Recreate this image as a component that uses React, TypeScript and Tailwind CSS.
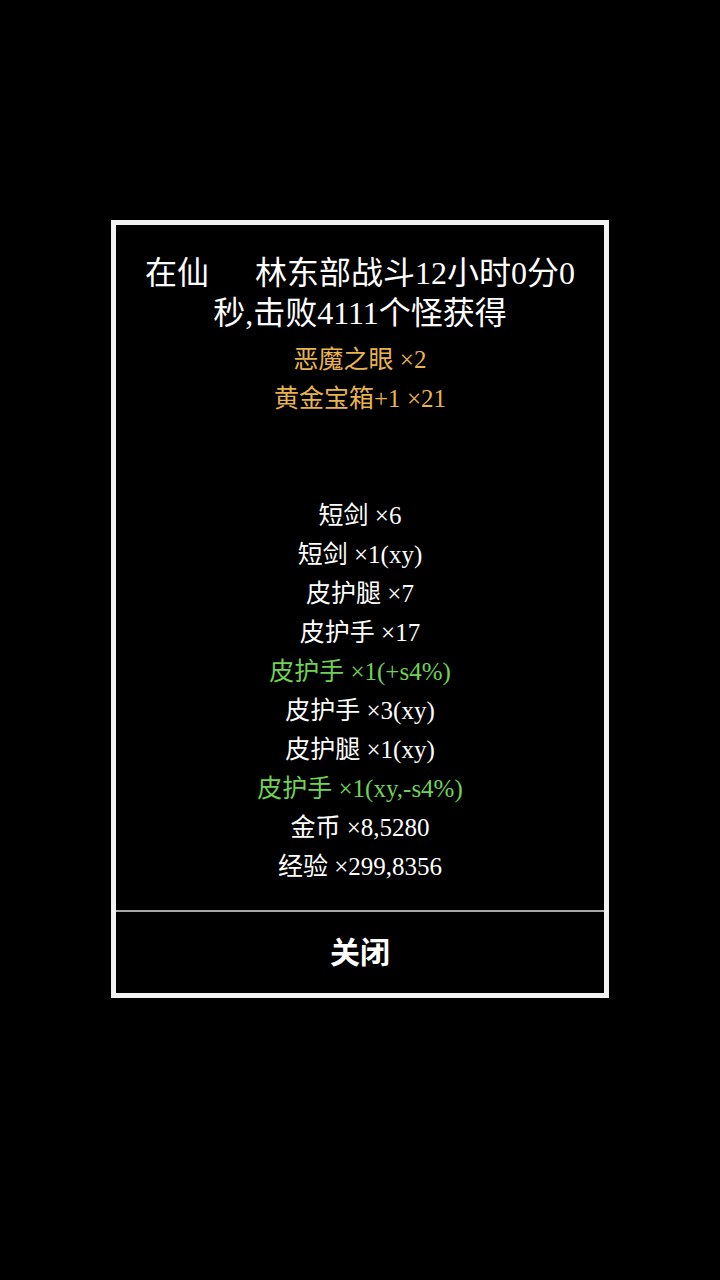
import React from "react";

type Drop = { name: string; qty: string; tone?: "gold" | "green" | "hidden" };

const drops: Drop[] = [
  { name: "恶魔之眼", qty: "×2", tone: "gold" },
  { name: "黄金宝箱+1", qty: "×21", tone: "gold" },
  { name: "", qty: "", tone: "hidden" },
  { name: "", qty: "", tone: "hidden" },
  { name: "短剑", qty: "×6" },
  { name: "短剑", qty: "×1(xy)" },
  { name: "皮护腿", qty: "×7" },
  { name: "皮护手", qty: "×17" },
  { name: "皮护手", qty: "×1(+s4%)", tone: "green" },
  { name: "皮护手", qty: "×3(xy)" },
  { name: "皮护腿", qty: "×1(xy)" },
  { name: "皮护手", qty: "×1(xy,-s4%)", tone: "green" },
  { name: "金币", qty: "×8,5280" },
  { name: "经验", qty: "×299,8356" },
];

const toneClass = {
  gold: "text-[#e8b44e]",
  green: "text-[#6fd255]",
  hidden: "text-transparent",
};

export default function App() {
  return (
    <div className="min-h-[1280px] w-full bg-black pt-[220px] font-['Liberation_Serif','Noto_Sans_CJK_SC',serif]">
      <div className="mx-auto w-[498px] border-[5px] border-[#f2f2f2] bg-black">
        <div className="px-[16px] pt-[28px] pb-[24px] text-center">
          <p className="text-[32px] leading-[40px] text-white">
            在仙<span className="inline-block w-[46px]"></span>林东部战斗12小时0分0
            <br />
            秒,击败4111个怪获得
          </p>
          <ul className="mt-[7px]">
            {drops.map((d, i) => (
              <li
                key={i}
                className={`h-[39px] text-[25px] leading-[39px] ${
                  d.tone ? toneClass[d.tone] : "text-white"
                }`}
              >
                {d.name} {d.qty}
              </li>
            ))}
          </ul>
        </div>
        <div className="h-[2px] bg-[#a8a8a8]"></div>
        <button className="flex h-[81px] w-full items-center justify-center pb-[5px] font-['Noto_Sans_CJK_SC',sans-serif] text-[30px] font-bold text-white">
          关闭
        </button>
      </div>
    </div>
  );
}
